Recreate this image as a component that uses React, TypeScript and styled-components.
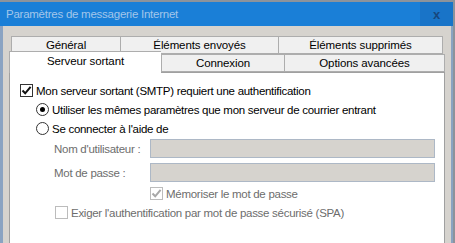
import styled, { createGlobalStyle } from "styled-components";

const GlobalStyle = createGlobalStyle`
  html, body {
    margin: 0;
    padding: 0;
    background: #8d939b;
  }
  body {
    padding-top: 2px;
    font-family: "Liberation Sans", Arial, sans-serif;
    font-size: 11px;
  }
`;

const Window = styled.div`
  width: 453px;
  height: 241px;
  overflow: hidden;
  background: #d6d3ce;
`;

const TitleBar = styled.div`
  display: flex;
  align-items: center;
  height: 24px;
  background: #1a7fd7;
`;

const TitleText = styled.div`
  flex: 1;
  padding-left: 6px;
  color: #a3c6ea;
  font-size: 11.5px;
  letter-spacing: -0.25px;
`;

const CloseButton = styled.div`
  width: 33px;
  height: 24px;
  display: flex;
  align-items: center;
  justify-content: center;
  background: #1974c8;
  color: #17477d;
  font-weight: bold;
  font-size: 13px;
`;

const Body = styled.div`
  height: 217px;
  border-left: 3px solid #8aa3c2;
  border-right: 2px solid #8aa3c2;
  padding: 11px 6px 0 6px;
`;

const TabRow = styled.div<{ $front?: boolean }>`
  display: flex;
  align-items: flex-end;
  height: ${({ $front }) => ($front ? "21px" : "17px")};
  margin-top: ${({ $front }) => ($front ? "-3px" : "0")};
  margin-left: ${({ $front }) => ($front ? "0" : "2px")};
  position: relative;
  z-index: ${({ $front }) => ($front ? 2 : 1)};
`;

const Tab = styled.div<{ $width: number; $selected?: boolean; $last?: boolean }>`
  box-sizing: border-box;
  width: ${({ $width }) => $width}px;
  height: ${({ $selected }) => ($selected ? "22px" : "18px")};
  margin-bottom: ${({ $selected }) => ($selected ? "-1px" : "0")};
  border: 1px solid #adadad;
  border-bottom: ${({ $selected }) => ($selected ? "none" : "1px solid #adadad")};
  border-right: ${({ $last }) => ($last ? "1px solid #adadad" : "none")};
  background: ${({ $selected }) => ($selected ? "#ffffff" : "#f0f0f0")};
  display: flex;
  justify-content: center;
  align-items: ${({ $selected }) => ($selected ? "flex-start" : "center")};
  padding-top: ${({ $selected }) => ($selected ? "3px" : "0")};
  font-size: 11.5px;
  letter-spacing: -0.1px;
  color: #000;
  white-space: nowrap;
`;

const Panel = styled.div`
  box-sizing: border-box;
  height: 200px;
  background: #ffffff;
  border: 1px solid #a0a0a0;
  padding: 11px 0 0 10px;
`;

const OptionRow = styled.div<{ $indent: number; $mt?: number }>`
  display: flex;
  align-items: center;
  gap: 3px;
  height: 13px;
  padding-left: ${({ $indent }) => $indent}px;
  margin-top: ${({ $mt }) => $mt ?? 0}px;
`;

const Label = styled.span<{ $disabled?: boolean }>`
  font-size: 11.5px;
  letter-spacing: -0.28px;
  color: ${({ $disabled }) => ($disabled ? "#6d6d6d" : "#000")};
  white-space: nowrap;
`;

const Box = styled.span<{ $disabled?: boolean }>`
  box-sizing: border-box;
  width: 13px;
  height: 13px;
  border: 1px solid ${({ $disabled }) => ($disabled ? "#bcbcbc" : "#333333")};
  background: #ffffff;
  display: flex;
  align-items: center;
  justify-content: center;
`;

const Radio = styled.span`
  box-sizing: border-box;
  width: 13px;
  height: 13px;
  border: 1px solid #333333;
  border-radius: 50%;
  background: #ffffff;
  display: flex;
  align-items: center;
  justify-content: center;
`;

const Dot = styled.span`
  width: 5px;
  height: 5px;
  border-radius: 50%;
  background: #000;
`;

const FieldRow = styled.div<{ $mt: number }>`
  display: flex;
  align-items: center;
  margin-top: ${({ $mt }) => $mt}px;
  padding-left: 34px;
`;

const FieldLabel = styled.span`
  width: 96px;
  font-size: 11.5px;
  letter-spacing: -0.28px;
  color: #6d6d6d;
  white-space: nowrap;
`;

const Field = styled.div`
  box-sizing: border-box;
  width: 285px;
  height: 19px;
  background: #d6d3ce;
  border: 1px solid #adb8c6;
`;

const Check = ({ color }: { color: string }) => (
  <svg width="11" height="11" viewBox="0 0 11 11">
    <path d="M1.5 5.5 L4.2 8.3 L9.6 1.8" fill="none" stroke={color} strokeWidth="2" />
  </svg>
);

export default function App() {
  return (
    <>
      <GlobalStyle />
      <Window>
        <TitleBar>
          <TitleText>Paramètres de messagerie Internet</TitleText>
          <CloseButton>x</CloseButton>
        </TitleBar>
        <Body>
          <TabRow>
            <Tab $width={109}>Général</Tab>
            <Tab $width={158}>Éléments envoyés</Tab>
            <Tab $width={165} $last>
              Éléments supprimés
            </Tab>
          </TabRow>
          <TabRow $front>
            <Tab $width={152} $selected>
              Serveur sortant
            </Tab>
            <Tab $width={123}>Connexion</Tab>
            <Tab $width={161} $last>
              Options avancées
            </Tab>
          </TabRow>
          <Panel>
            <OptionRow $indent={0}>
              <Box>
                <Check color="#111" />
              </Box>
              <Label>Mon serveur sortant (SMTP) requiert une authentification</Label>
            </OptionRow>
            <OptionRow $indent={16} $mt={6}>
              <Radio>
                <Dot />
              </Radio>
              <Label>Utiliser les mêmes paramètres que mon serveur de courrier entrant</Label>
            </OptionRow>
            <OptionRow $indent={16} $mt={6}>
              <Radio />
              <Label>Se connecter à l'aide de</Label>
            </OptionRow>
            <FieldRow $mt={4}>
              <FieldLabel>Nom d'utilisateur :</FieldLabel>
              <Field />
            </FieldRow>
            <FieldRow $mt={5}>
              <FieldLabel>Mot de passe :</FieldLabel>
              <Field />
            </FieldRow>
            <OptionRow $indent={130} $mt={5}>
              <Box $disabled>
                <Check color="#a8a8a8" />
              </Box>
              <Label $disabled>Mémoriser le mot de passe</Label>
            </OptionRow>
            <OptionRow $indent={35} $mt={6}>
              <Box $disabled />
              <Label $disabled>Exiger l'authentification par mot de passe sécurisé (SPA)</Label>
            </OptionRow>
          </Panel>
        </Body>
      </Window>
    </>
  );
}
